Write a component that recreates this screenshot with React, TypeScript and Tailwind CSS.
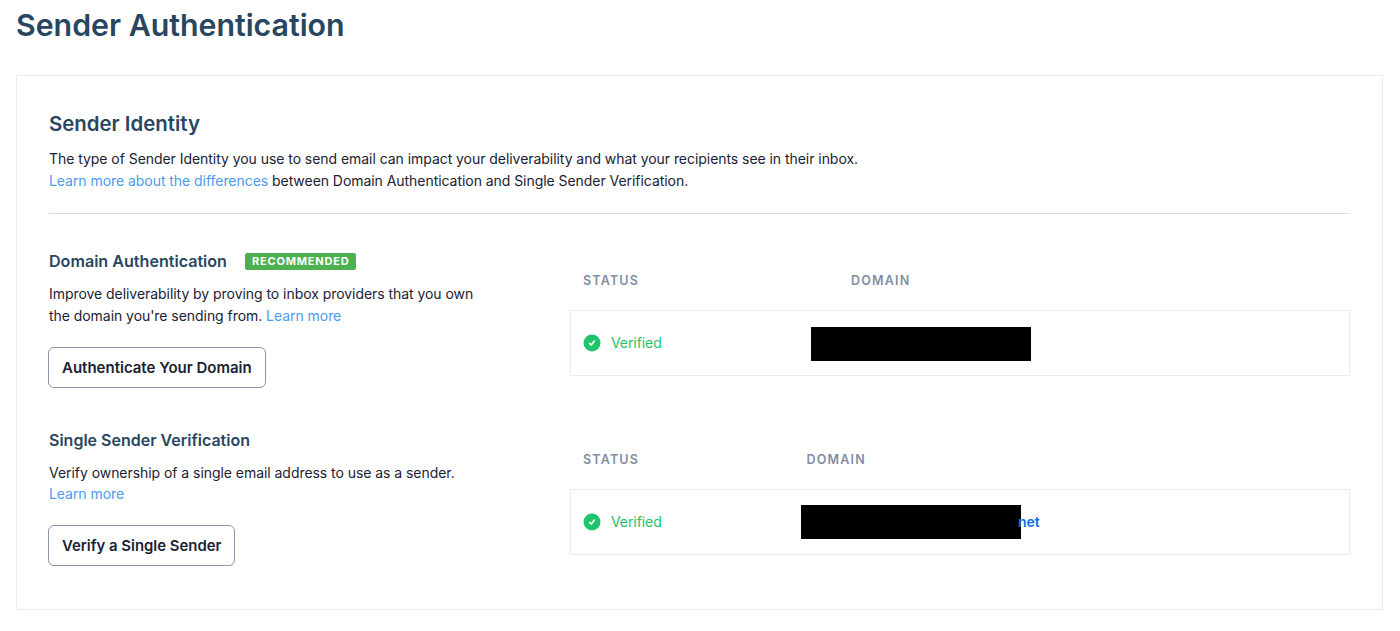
const linkClass = 'text-[#4a9ced]'

function CheckBadge() {
  return (
    <svg width="18" height="18" viewBox="0 0 18 18" className="shrink-0">
      <circle cx="9" cy="9" r="8.5" fill="#20c56b" />
      <path d="M6.6 9.4l1.6 1.6 3.2-4" fill="none" stroke="#fff" strokeWidth="1.6" strokeLinecap="round" strokeLinejoin="round" />
    </svg>
  )
}

interface StatusTableProps {
  domainHeaderClass: string
  children: React.ReactNode
}

function StatusTable({ domainHeaderClass, children }: StatusTableProps) {
  return (
    <div className="w-[780px] pt-[23px]">
      <div className="flex h-[16px] items-center pl-[13px] text-[12.5px] leading-[16px] font-semibold tracking-[1.2px] text-[#7f8fa3]">
        <span className="w-[100px]">STATUS</span>
        <span className={domainHeaderClass}>DOMAIN</span>
      </div>
      <div className="relative mt-[21px] flex h-[66px] items-center border border-[#e9ecef] pl-[12px]">
        <CheckBadge />
        <span className="mb-[2px] ml-[10px] text-[14px] tracking-[-0.08px] text-[#20c56b]">Verified</span>
        {children}
      </div>
    </div>
  )
}

export default function App() {
  return (
    <div className="min-h-[631px] bg-white px-4 font-['Inter',sans-serif] text-[#1a2233]">
      <h1 className="h-[75px] pt-[6px] text-[30.3px] leading-[38px] font-semibold text-[#294661]">
        Sender Authentication
      </h1>

      <div className="h-[535px] w-[1367px] border border-[#e9ecef] px-[32px] pt-[34px]">
        <h2 className="text-[20.4px] leading-[28px] font-semibold text-[#294661]">Sender Identity</h2>
        <p className="mt-[10px] text-[14px] leading-[22px] tracking-[-0.05px]">
          The type of Sender Identity you use to send email can impact your deliverability and what your recipients see in their inbox.
          <br />
          <a className={linkClass}>Learn more about the differences</a> between Domain Authentication and Single Sender Verification.
        </p>
        <div className="mt-[21px] h-px w-[1301px] bg-[#d9dce1]" />

        <div className="mt-[36px] flex h-[179px]">
          <div className="w-[521px]">
            <div className="flex h-[22px] items-center">
              <h3 className="text-[16.1px] leading-[22px] font-semibold text-[#294661]">Domain Authentication</h3>
              <span className="ml-[18px] flex h-[17px] items-center rounded-[2px] bg-[#4db151] px-[7px] text-[11px] font-bold tracking-[0.8px] text-white">
                RECOMMENDED
              </span>
            </div>
            <p className="mt-[11px] text-[14px] leading-[22px] tracking-[-0.05px]">
              Improve deliverability by proving to inbox providers that you own
              <br />
              the domain you're sending from. <a className={linkClass}>Learn more</a>
            </p>
            <button className="mt-[20px] -ml-px h-[41px] rounded-[6px] border border-[#8b94ad] px-[13px] pt-px text-[15px] font-semibold">
              Authenticate Your Domain
            </button>
          </div>
          <StatusTable domainHeaderClass="ml-[168px]">
            <div className="absolute top-[16px] left-[240px] h-[34px] w-[220px] bg-black" />
          </StatusTable>
        </div>

        <div className="flex">
          <div className="w-[521px]">
            <h3 className="h-[22px] text-[16px] leading-[22px] font-semibold text-[#294661]">Single Sender Verification</h3>
            <p className="mt-[11px] text-[14px] leading-[21px] tracking-[-0.05px]">
              Verify ownership of a single email address to use as a sender.
              <br />
              <a className={linkClass}>Learn more</a>
            </p>
            <button className="mt-[21px] -ml-px h-[41px] rounded-[6px] border border-[#8b94ad] px-[13px] pt-px text-[14.9px] font-semibold">
              Verify a Single Sender
            </button>
          </div>
          <StatusTable domainHeaderClass="ml-[123.5px]">
            <div className="absolute top-[15px] left-[230px] h-[34px] w-[220px] bg-black" />
            <span className="absolute top-[22px] left-[447px] text-[14px] leading-[20px] font-semibold text-[#0f6fe6]">net</span>
          </StatusTable>
        </div>
      </div>
    </div>
  )
}
